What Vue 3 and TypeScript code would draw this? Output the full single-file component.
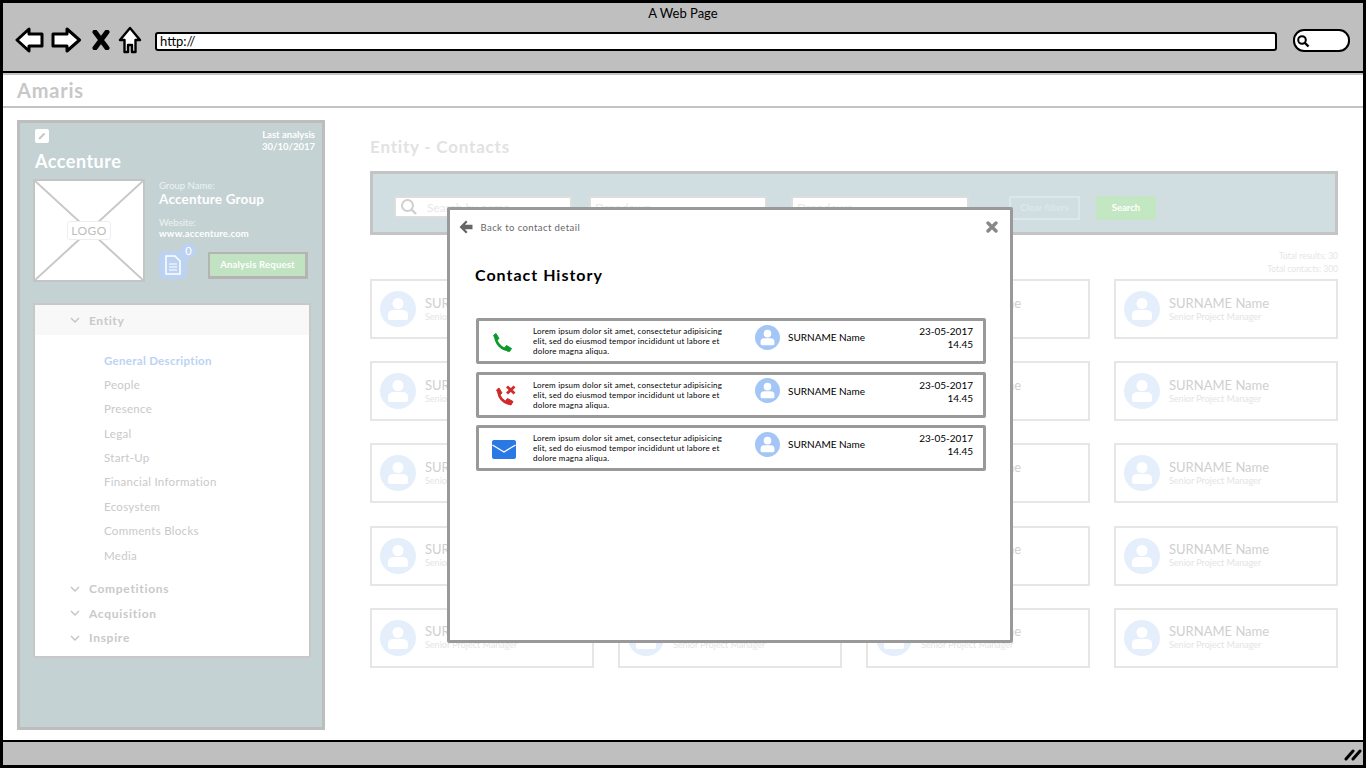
<template>
  <div class="browser">
    <header class="chrome">
      <div class="chrome-title">A Web Page</div>
      <div class="chrome-tools">
        <svg class="nav-icon" width="30" height="26" viewBox="0 0 30 26">
          <path d="M2 13 L14 2 L14 7 L27 7 L27 19 L14 19 L14 24 Z" fill="#fff" stroke="#000" stroke-width="3" stroke-linejoin="round" />
        </svg>
        <svg class="nav-icon forward" width="30" height="26" viewBox="0 0 30 26">
          <path d="M28.500 13 L16 2 L16 7 L2 7 L2 19 L16 19 L16 24 Z" fill="#fff" stroke="#000" stroke-width="3" stroke-linejoin="round" />
        </svg>
        <svg class="nav-icon stop" width="18" height="20" viewBox="0 0 18 20">
          <path d="M3 2 L15 18 M15 2 L3 18" stroke="#000" stroke-width="5" stroke-linecap="round" />
        </svg>
        <svg class="nav-icon home" width="24" height="28" viewBox="0 0 24 28">
          <path d="M12 2 L22 14 L17.500 14 L17.500 26 L14 26 L14 19 L10 19 L10 26 L6.500 26 L6.500 14 L2 14 Z" fill="#fff" stroke="#000" stroke-width="2.400" stroke-linejoin="round" />
        </svg>
        <div class="url-bar">http://</div>
        <div class="search-pill">
          <svg width="14" height="14" viewBox="0 0 14 14">
            <circle cx="6" cy="6" r="3.800" fill="none" stroke="#000" stroke-width="2" />
            <path d="M9 9 L12.500 12.500" stroke="#000" stroke-width="2.400" />
          </svg>
        </div>
      </div>
    </header>

    <div class="brand-bar">Amaris</div>

    <main class="page">
      <aside class="sidebar">
        <div class="side-top">
          <span class="edit-btn">
            <svg width="10" height="10" viewBox="0 0 10 10">
              <path d="M1.500 8.500 L2 6.500 L6.800 1.700 L8.300 3.200 L3.500 8 Z" fill="#c9c9c9" />
            </svg>
          </span>
          <div class="last-analysis">Last analysis<br />30/10/2017</div>
        </div>
        <h2 class="company">Accenture</h2>
        <div class="company-info">
          <div class="logo-box">
            <svg class="logo-cross" width="108" height="99" viewBox="0 0 108 99" preserveAspectRatio="none">
              <path d="M0 0 L108 99 M108 0 L0 99" stroke="#c8c8c8" stroke-width="2" />
            </svg>
            <span class="logo-label">LOGO</span>
          </div>
          <div class="info-text">
            <div class="info-label">Group Name:</div>
            <div class="info-group">Accenture Group</div>
            <div class="info-label site">Website:</div>
            <div class="info-site">www.accenture.com</div>
            <div class="info-actions">
              <span class="doc-btn">
                <svg width="16" height="20" viewBox="0 0 16 20">
                  <path d="M1 1 H10 L15 6 V19 H1 Z" fill="none" stroke="#fff" stroke-width="1.500" />
                  <path d="M4 9 H12 M4 12 H12 M4 15 H12" stroke="#fff" stroke-width="1.200" />
                </svg>
                <span class="doc-count">0</span>
              </span>
              <span class="analysis-btn">Analysis Request</span>
            </div>
          </div>
        </div>

        <nav class="tree">
          <div class="tree-head">
            <svg class="chev" width="10" height="6" viewBox="0 0 10 6"><path d="M1 1 L5 5 L9 1" fill="none" stroke="#c4c4c4" stroke-width="1.400" /></svg>
            Entity
          </div>
          <ul class="tree-list">
            <li v-for="(item, i) in entityItems" :key="item" :class="{ active: i === 0 }">{{ item }}</li>
          </ul>
          <div v-for="group in treeGroups" :key="group" class="tree-group">
            <svg class="chev" width="10" height="6" viewBox="0 0 10 6"><path d="M1 1 L5 5 L9 1" fill="none" stroke="#c4c4c4" stroke-width="1.400" /></svg>
            {{ group }}
          </div>
        </nav>
      </aside>

      <section class="content">
        <h1 class="content-title">Entity - Contacts</h1>
        <div class="filters">
          <div class="filter-input first">
            <svg width="18" height="18" viewBox="0 0 18 18">
              <circle cx="7.500" cy="7.500" r="5.500" fill="none" stroke="#cfcfcf" stroke-width="2" />
              <path d="M11.500 11.500 L16 16" stroke="#cfcfcf" stroke-width="2.400" />
            </svg>
            <span>Search by name</span>
          </div>
          <div class="filter-input"><span>Dropdown</span></div>
          <div class="filter-input third"><span>Dropdown</span></div>
          <span class="clear-btn">Clear filters</span>
          <span class="search-btn">Search</span>
        </div>
        <div class="totals">Total results: 30<br />Total contacts: 300</div>
        <div class="contact-grid">
          <div v-for="n in 20" :key="n" class="contact-card">
            <svg class="avatar" width="36" height="36" viewBox="0 0 36 36">
              <circle cx="18" cy="18" r="18" fill="#e5effb" />
              <circle cx="18" cy="12.500" r="5.500" fill="#fff" />
              <path d="M8 27 V24 Q8 19 14 19 H22 Q28 19 28 24 V27 Q28 29 26 29 H10 Q8 29 8 27 Z" fill="#fff" />
            </svg>
            <div>
              <div class="card-name">SURNAME Name</div>
              <div class="card-role">Senior Project Manager</div>
            </div>
          </div>
        </div>
      </section>
    </main>

    <footer class="status-bar">
      <svg width="18" height="14" viewBox="0 0 18 14">
        <path d="M2 12 L9 4 M9 12 L16 4" stroke="#000" stroke-width="3" stroke-linecap="round" />
      </svg>
    </footer>

    <div class="modal">
      <div class="modal-top">
        <svg width="14" height="14" viewBox="0 0 14 14">
          <path d="M7 0.500 L0.500 7 L7 13.500 L8.500 12 L6 9.300 H13.500 V4.700 H6 L8.500 2 Z" fill="#666" />
        </svg>
        <span class="back-link">Back to contact detail</span>
        <svg class="close" width="12" height="12" viewBox="0 0 12 12">
          <path d="M2 2 L10 10 M10 2 L2 10" stroke="#888" stroke-width="3.400" stroke-linecap="round" />
        </svg>
      </div>
      <h3 class="modal-title">Contact History</h3>
      <div class="history">
        <div v-for="row in historyRows" :key="row.kind" class="history-row">
          <div class="row-icon" :class="row.kind">
            <svg v-if="row.kind === 'call'" width="22" height="22" viewBox="0 0 22 22">
              <path d="M4.500 4 C4.500 11 10 17 17.500 18" fill="none" stroke="#0a9a2a" stroke-width="2.600" />
              <path d="M2.500 3.500 L5 1.500 L8 6.500 L5.500 8.500 Z M13.500 16 L15.500 13.500 L20.500 16.500 L18.500 19.500 Q16 20 13.500 16 Z" fill="#0a9a2a" stroke="#0a9a2a" stroke-linejoin="round" />
            </svg>
            <svg v-else-if="row.kind === 'missed'" width="22" height="22" viewBox="0 0 22 22">
              <path d="M3.500 7 C3.500 13 8 18.500 14.500 19.500" fill="none" stroke="#d02a2a" stroke-width="2.600" />
              <path d="M1.500 6 L4 4 L7 9 L4.500 11 Z M10.500 17 L12.500 14.500 L18 17.500 L16 21 Q13 21 10.500 17 Z" fill="#d02a2a" stroke="#d02a2a" stroke-linejoin="round" />
              <path d="M12 2.500 L19.500 9.500 M19.500 2.500 L12 9.500" stroke="#d02a2a" stroke-width="2.800" />
            </svg>
            <svg v-else width="24" height="19" viewBox="0 0 24 19">
              <rect width="24" height="19" rx="2" fill="#2a78e4" />
              <path d="M0.500 5 L12 12 L23.500 5" fill="none" stroke="#fff" stroke-width="1.300" />
            </svg>
          </div>
          <p class="row-text">Lorem ipsum dolor sit amet, consectetur adipisicing<br />elit, sed do eiusmod tempor incididunt ut labore et<br />dolore magna aliqua.</p>
          <svg class="row-avatar" width="25" height="25" viewBox="0 0 36 36">
            <circle cx="18" cy="18" r="18" fill="#a3c6f7" />
            <circle cx="18" cy="12.500" r="5.500" fill="#fff" />
            <path d="M8 27 V24 Q8 19 14 19 H22 Q28 19 28 24 V27 Q28 29 26 29 H10 Q8 29 8 27 Z" fill="#fff" />
          </svg>
          <span class="row-name">SURNAME Name</span>
          <div class="row-date">23-05-2017<br />14.45</div>
        </div>
      </div>
    </div>
  </div>
</template>

<script setup lang="ts">
type RowKind = 'call' | 'missed' | 'mail'

const entityItems: string[] = [
  'General Description',
  'People',
  'Presence',
  'Legal',
  'Start-Up',
  'Financial Information',
  'Ecosystem',
  'Comments Blocks',
  'Media',
]

const treeGroups: string[] = ['Competitions', 'Acquisition', 'Inspire']

const historyRows: { kind: RowKind }[] = [{ kind: 'call' }, { kind: 'missed' }, { kind: 'mail' }]
</script>

<style>
html,
body {
  margin: 0;
  background: #fff;
}
</style>

<style scoped>
.browser {
  position: relative;
  width: 1366px;
  height: 768px;
  box-sizing: border-box;
  border: 3px solid #000;
  display: flex;
  flex-direction: column;
  overflow: hidden;
  font-family: 'Lato', 'Liberation Sans', sans-serif;
  background: #fff;
}

.chrome {
  height: 68px;
  flex: none;
  background: #bfbfbf;
  border-bottom: 2px solid #000;
}

.chrome-title {
  text-align: center;
  font-size: 13px;
  line-height: 16px;
  padding-top: 2px;
  padding-bottom: 1px;
  color: #000;
}

.chrome-tools {
  display: flex;
  align-items: center;
  padding-left: 12px;
  height: 36px;
}

.nav-icon {
  margin-right: 6px;
}

.nav-icon.forward {
  margin-right: 11px;
}

.nav-icon.stop {
  margin-right: 8px;
}

.nav-icon.home {
  margin-right: 13px;
}

.url-bar {
  width: 1115px;
  height: 15px;
  border: 2.500px solid #000;
  border-radius: 3px;
  background: #fff;
  font-size: 13px;
  line-height: 15px;
  padding-left: 3px;
  margin-top: 2px;
}

.search-pill {
  width: 50px;
  height: 17px;
  margin-left: 16px;
  margin-top: 1px;
  padding: 1px 2px 1px 1px;
  border: 2.500px solid #000;
  border-radius: 11px;
  background: #fff;
  display: flex;
  align-items: center;
}

.brand-bar {
  height: 35px;
  flex: none;
  box-sizing: border-box;
  border-top: 2px solid #c4c4c4;
  border-bottom: 2px solid #c4c4c4;
  padding-left: 14px;
  font-size: 20px;
  font-weight: 700;
  line-height: 31px;
  letter-spacing: 0.800px;
  color: #c8c8c8;
}

.page {
  flex: 1;
  display: flex;
  min-height: 0;
  padding: 12px 0 0 14px;
}

.sidebar {
  width: 308px;
  height: 610px;
  flex: none;
  box-sizing: border-box;
  background: #c4d2d4;
  border: 3px solid #bdbdbd;
  padding: 3px 7px 0 13px;
  color: #fff;
}

.side-top {
  display: flex;
  justify-content: space-between;
  padding-left: 2px;
}

.edit-btn {
  width: 14px;
  height: 14px;
  background: #fff;
  border-radius: 2px;
  display: flex;
  align-items: center;
  justify-content: center;
  margin-top: 3px;
}

.last-analysis {
  text-align: right;
  font-size: 9.500px;
  line-height: 12px;
  font-weight: 700;
  padding-top: 3px;
}

.company {
  margin: -3px 0 0;
  padding-left: 2px;
  font-size: 18px;
  line-height: 22px;
  font-weight: 700;
  letter-spacing: 0.500px;
}

.company-info {
  display: flex;
  margin-top: 7px;
}

.logo-box {
  position: relative;
  width: 112px;
  height: 103px;
  box-sizing: border-box;
  flex: none;
  background: #fff;
  border: 2px solid #c4c4c4;
  display: flex;
  align-items: center;
  justify-content: center;
}

.logo-cross {
  position: absolute;
  left: 0;
  top: 0;
}

.logo-label {
  position: relative;
  font-size: 12px;
  line-height: 17px;
  padding: 0 3px;
  color: #c0bdb8;
  background: #fff;
  border: 1px solid #eee;
  border-radius: 3px;
  letter-spacing: 0.400px;
}

.info-text {
  padding-left: 14px;
  padding-top: 1px;
  min-width: 0;
}

.info-label {
  font-size: 9.500px;
  line-height: 12px;
  color: #eef2f2;
}

.info-label.site {
  margin-top: 10px;
}

.info-group {
  font-size: 13.500px;
  font-weight: 700;
  line-height: 15px;
  letter-spacing: 0.200px;
}

.info-site {
  font-size: 9.500px;
  font-weight: 700;
  line-height: 13px;
  margin-top: -2px;
  letter-spacing: 0.200px;
}

.info-actions {
  display: flex;
  align-items: flex-start;
  margin-top: 11px;
}

.doc-btn {
  position: relative;
  width: 28px;
  height: 28px;
  background: #bcd2f2;
  border-radius: 6px;
  display: flex;
  align-items: center;
  justify-content: center;
}

.doc-count {
  position: absolute;
  right: -9px;
  top: -8px;
  width: 15px;
  height: 15px;
  border-radius: 50%;
  background: #bcd2f2;
  font-size: 11px;
  line-height: 15px;
  text-align: center;
}

.analysis-btn {
  width: 95px;
  height: 22px;
  margin-left: 21px;
  margin-top: 1px;
  background: #c1e3c1;
  border: 2px solid #b4b4b4;
  border-right-width: 3px;
  border-bottom-width: 3px;
  font-size: 9.500px;
  font-weight: 700;
  line-height: 22px;
  text-align: center;
  letter-spacing: 0.200px;
}

.tree {
  width: 278px;
  height: 355px;
  box-sizing: border-box;
  margin-top: 21px;
  background: #fff;
  border: 2.500px solid #c8c8c8;
  color: #c9c9c9;
  font-size: 12px;
}

.tree-head {
  height: 30px;
  background: #f8f8f8;
  display: flex;
  align-items: center;
  gap: 9px;
  padding-left: 35px;
  font-weight: 700;
  letter-spacing: 0.600px;
}

.tree-list {
  list-style: none;
  margin: 0;
  padding: 13.500px 0 8.500px 69px;
  font-size: 11.500px;
  letter-spacing: 0.300px;
}

.tree-list li {
  height: 24.400px;
  line-height: 24px;
}

.tree-list li.active {
  color: #bcd3f3;
  font-weight: 700;
}

.tree-group {
  height: 24.500px;
  display: flex;
  align-items: center;
  gap: 9px;
  padding-left: 35px;
  font-weight: 700;
  letter-spacing: 0.700px;
}

.content {
  width: 968px;
  flex: none;
  margin-left: 45px;
}

.content-title {
  margin: 0;
  padding-top: 15px;
  font-size: 17px;
  line-height: 24px;
  font-weight: 700;
  letter-spacing: 0.800px;
  color: #e2e2e2;
}

.filters {
  height: 64px;
  margin-top: 12px;
  box-sizing: border-box;
  background: #d0dde1;
  border: 3px solid #c4c4c4;
  display: flex;
  align-items: center;
  padding: 8px 0 0 21px;
}

.filter-input {
  width: 178px;
  height: 22px;
  box-sizing: border-box;
  background: #fff;
  border: 2px solid #ddd;
  display: flex;
  align-items: center;
  gap: 9px;
  padding-left: 4px;
  margin-right: 17px;
  color: #e8e8e8;
  font-size: 12px;
  overflow: hidden;
}

.filter-input.third {
  margin-left: 7px;
  margin-right: 40px;
}

.clear-btn {
  width: 71px;
  height: 24px;
  box-sizing: border-box;
  margin-top: 1px;
  border: 2px solid #dde6e8;
  color: #dfe7e9;
  font-size: 9.500px;
  font-weight: 700;
  line-height: 20px;
  text-align: center;
}

.search-btn {
  width: 60px;
  height: 24px;
  margin-left: 16px;
  margin-top: 1px;
  background: #c2e7c2;
  color: #fff;
  font-size: 9.500px;
  font-weight: 700;
  line-height: 24px;
  text-align: center;
}

.totals {
  margin-top: 15px;
  text-align: right;
  font-size: 8.500px;
  line-height: 13px;
  color: #e6e6e6;
  height: 29px;
}

.contact-grid {
  display: grid;
  grid-template-columns: repeat(4, 224px);
  grid-auto-rows: 60px;
  column-gap: 24px;
  row-gap: 22.200px;
}

.contact-card {
  box-sizing: border-box;
  border: 2.500px solid #e6e6e6;
  display: flex;
  align-items: center;
  gap: 9px;
  padding-left: 8px;
}

.card-name {
  font-size: 13px;
  line-height: 15px;
  color: #cfcfcf;
}

.card-role {
  font-size: 9px;
  line-height: 12px;
  color: #e4e4e4;
}

.status-bar {
  height: 25px;
  flex: none;
  box-sizing: border-box;
  background: #bfbfbf;
  border-top: 2px solid #000;
  display: flex;
  justify-content: flex-end;
  align-items: center;
  padding-right: 1px;
}

.modal {
  position: absolute;
  left: 444px;
  top: 204px;
  width: 566px;
  height: 436px;
  box-sizing: border-box;
  background: #fff;
  border: 3px solid #999;
  border-radius: 2px;
  padding: 0 24px 0 26px;
}

.modal-top {
  display: flex;
  align-items: center;
  height: 14px;
  margin: 7px -12px 0 -17px;
  padding-top: 3px;
}

.back-link {
  margin-left: 7.500px;
  font-size: 9.500px;
  letter-spacing: 0.420px;
  color: #666;
}

.close {
  margin-left: auto;
}

.modal-title {
  margin: 31px 0 0 -1px;
  font-size: 16px;
  line-height: 20px;
  font-weight: 700;
  letter-spacing: 1px;
  color: #000;
}

.history {
  margin-top: 33px;
  display: flex;
  flex-direction: column;
  gap: 7.700px;
}

.history-row {
  height: 46px;
  box-sizing: border-box;
  border: 3px solid #999;
  border-radius: 2px;
  display: flex;
  align-items: center;
}

.row-icon {
  width: 54px;
  flex: none;
  display: flex;
  justify-content: center;
}

.row-icon.call {
  padding: 3px 8px 0 0;
  width: 46px;
}

.row-icon.mail {
  padding: 2px 4px 0 0;
  width: 50px;
}

.row-text {
  width: 222px;
  flex: none;
  margin: 0;
  font-size: 8px;
  line-height: 10px;
  letter-spacing: 0.200px;
  color: #000;
}

.row-avatar {
  flex: none;
  margin-bottom: 8px;
}

.row-name {
  margin-left: 8px;
  margin-bottom: 8px;
  font-size: 10px;
  color: #000;
}

.row-date {
  margin-left: auto;
  margin-bottom: 6px;
  padding-right: 10px;
  text-align: right;
  font-size: 10px;
  line-height: 13px;
  color: #000;
}
</style>
